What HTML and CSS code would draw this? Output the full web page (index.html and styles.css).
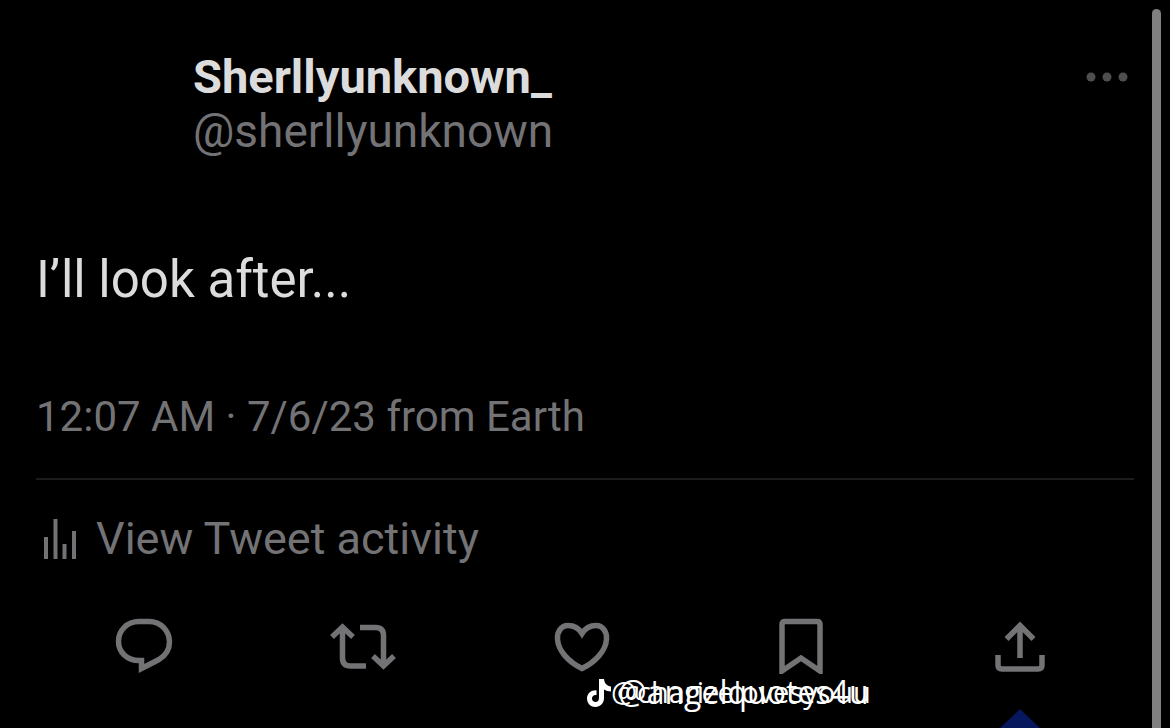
FILE: index.html
```html
<!DOCTYPE html>
<html lang="en">
<head>
  <meta charset="UTF-8">
  <meta name="viewport" content="width=device-width, initial-scale=1.0">
  <title>Tweet</title>
  <link rel="stylesheet" href="styles.css">
</head>
<body>
  <main class="tweet">
    <header class="tweet-header">
      <div class="author">
        <h1 class="name">Sherllyunknown_</h1>
        <a class="handle" href="#">@sherllyunknown</a>
      </div>
      <button class="more" aria-label="More">
        <svg width="42" height="10" viewBox="0 0 42 10">
          <circle cx="5" cy="5" r="4.5"/>
          <circle cx="21" cy="5" r="4.5"/>
          <circle cx="37" cy="5" r="4.5"/>
        </svg>
      </button>
    </header>

    <p class="tweet-text">I’ll look after...</p>
    <p class="meta">12:07 AM · 7/6/23 from Earth</p>

    <a class="activity" href="#">
      <svg width="34" height="42" viewBox="0 0 34 42">
        <path d="M4 19v22M13.500 1v40M22.500 26v15M32 13v28"/>
      </svg>
      View Tweet activity
    </a>

    <div class="actions">
      <button class="action" aria-label="Reply">
        <svg width="68" height="60" viewBox="0 0 68 60">
          <path d="M29 7.500H39C51 7.500 59.500 17 59.500 28C59.500 36 55.500 41.500 49 45.500L31.500 54.500V46.500H29C17 46.500 8.500 38 8.500 27.500C8.500 16.500 17 7.500 29 7.500Z"/>
        </svg>
      </button>
      <button class="action" aria-label="Retweet">
        <svg width="68" height="60" viewBox="0 0 68 60">
          <path d="M3 23L13.500 13L24 23M13.500 14V44Q13.500 52 21.500 52H37M31 13.500H46.500Q54.500 13.500 54.500 21.500V51M44 42L54.500 52L65 42"/>
        </svg>
      </button>
      <button class="action" aria-label="Like">
        <svg width="68" height="60" viewBox="0 0 68 60">
          <path d="M34 19.500C30 13 25 11.500 20 11.500C13 11.500 9 18 9.500 25C10 37 21 48 34 54.500C47 48 58 37 58.500 25C59 18 55 11.500 48 11.500C43 11.500 38 13 34 19.500Z"/>
        </svg>
      </button>
      <button class="action" aria-label="Bookmark">
        <svg width="68" height="60" viewBox="0 0 68 60">
          <path d="M18 7.500H50Q53 7.500 53 10.500V57L34 44L15 57V10.500Q15 7.500 18 7.500Z"/>
        </svg>
      </button>
      <button class="action" aria-label="Share">
        <svg width="68" height="60" viewBox="0 0 68 60">
          <path d="M20.500 25L34 11.500L47.500 25M34 12V44M12 41V51Q12 55 16 55H52Q56 55 56 51V41"/>
        </svg>
      </button>
    </div>

    <div class="watermark">
      <svg width="25" height="28" viewBox="0 0 25 28">
        <path d="M12 0H17C17.500 4.500 20 7 24 7.500V12.500C21 12.500 19 11.500 17 10.500V19C17 24.500 13 28 8.500 28C4 28 0 24.500 0 19.500C0 14.500 4 11 9.500 11.200V16.200C7 15.700 5 17.200 5 19.500C5 21.500 6.500 23 8.500 23C10.500 23 12 21.500 12 19Z"/>
      </svg>
      <span class="user user-back">@charizelovesyouu</span>
      <span class="user user-front">@angelquotes4u</span>
    </div>
    <svg class="peak" width="42" height="20" viewBox="0 0 42 20">
      <path d="M21 0L42 20H0Z"/>
    </svg>
    <div class="scrollbar"></div>
  </main>
</body>
</html>
```

FILE: styles.css
```css
* {
  box-sizing: border-box;
}

body {
  margin: 0;
  background: #000;
  color: #737376;
  font-family: Roboto, "Liberation Sans", sans-serif;
  font-size: 46px;
  line-height: 54px;
}

h1,
p {
  margin: 0;
}

a {
  color: inherit;
  text-decoration: none;
}

button {
  padding: 0;
  border: none;
  background: none;
  cursor: pointer;
}

svg {
  display: block;
}

.tweet {
  position: relative;
  min-height: 100vh;
  padding: 50px 36px 0;
  overflow: hidden;
}

.tweet-header {
  display: flex;
  justify-content: space-between;
  align-items: flex-start;
  padding-left: 157px;
}

.author {
  display: flex;
  flex-direction: column;
}

.name {
  color: #dcdcdc;
  font-size: 47px;
  font-weight: 700;
}

.more {
  margin: 22px 6px 0 0;
}

.more svg {
  fill: #4e4e50;
}

.tweet-text {
  margin-top: 92px;
  color: #dcdcdc;
  font-size: 51px;
  line-height: 60px;
}

.meta {
  margin-top: 80px;
  padding-bottom: 34px;
  border-bottom: 2px solid #1c1c1e;
  font-size: 42px;
}

.activity {
  display: flex;
  align-items: center;
  gap: 20px;
  margin-top: 32px;
  padding-left: 6px;
  font-size: 45px;
}

.activity svg {
  stroke: #737376;
  stroke-width: 4;
}

.actions {
  display: grid;
  grid-template-columns: repeat(5, 1fr);
  justify-items: center;
  margin: 48px 4px 0 -2px;
}

.action svg {
  fill: none;
  stroke: #737376;
  stroke-width: 5.5;
}

.watermark {
  position: absolute;
  left: 587px;
  top: 679px;
  color: #fff;
  font-family: "Open Sans", sans-serif;
  font-weight: 500;
  line-height: 30px;
}

.watermark svg {
  fill: #fff;
}

.user {
  position: absolute;
  top: -2px;
}

.user-back {
  left: 24px;
  font-size: 29px;
}

.user-front {
  left: 31px;
  font-size: 32px;
}

.peak {
  position: absolute;
  left: 999px;
  top: 709px;
  fill: #06175e;
}

.scrollbar {
  position: absolute;
  top: 9px;
  right: 9px;
  bottom: 0;
  width: 9px;
  border-radius: 5px 5px 0 0;
  background: #808080;
}
```
